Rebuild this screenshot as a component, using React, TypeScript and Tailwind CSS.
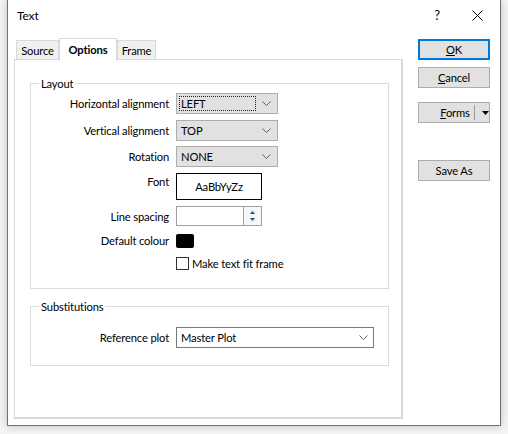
import React from "react";

const Chevron = () => (
  <svg width="9" height="5" viewBox="0 0 9 5" className="shrink-0">
    <polyline points="0.5,0.5 4.5,4.5 8.5,0.5" fill="none" stroke="#606060" strokeWidth="1" />
  </svg>
);

function Combo({ value, focus }: { value: string; focus?: boolean }) {
  return (
    <div className="w-[102px] h-[21px] border border-[#adadad] bg-[#e1e1e1] flex items-center pl-[2px] pr-[6px]">
      <div
        className={
          "flex-1 h-[15px] flex items-center pl-[1px] mr-[6px] leading-none " +
          (focus ? "border border-dotted border-[#222]" : "border border-transparent")
        }
      >
        {value}
      </div>
      <Chevron />
    </div>
  );
}

function Row({ label, children, top, align = "center" }: { label: string; children: React.ReactNode; top: string; align?: "center" | "start" }) {
  return (
    <div className={"flex " + top + (align === "center" ? " items-center" : " items-start")}>
      <div className={"w-[138px] text-right shrink-0" + (align === "start" ? " pt-[1px]" : "")}>{label}</div>
      <div className="ml-[7px] flex">{children}</div>
    </div>
  );
}

function Btn({ children, primary, cls }: { children: React.ReactNode; primary?: boolean; cls: string }) {
  return (
    <div
      className={
        "w-[72px] h-[21px] bg-[#e1e1e1] flex items-center justify-center " +
        (primary ? "border-2 border-[#0078d7] " : "border border-[#adadad] ") +
        cls
      }
    >
      {children}
    </div>
  );
}

export default function App() {
  return (
    <div className="w-[508px] h-[434px] bg-[#f4f4f4] overflow-hidden text-[11.2px] leading-[15px] tracking-[-0.15px] text-black font-['Lato','Noto_Sans',sans-serif]">
      <div className="ml-[7px] w-[494px] h-[426px] bg-white border-x border-b border-[#707070] shadow-[0_0_8px_rgba(0,0,0,0.22)] flex flex-col">
        {/* title bar */}
        <div className="h-[30px] flex items-center pl-[9px] shrink-0 text-[12px]">
          <span className="flex-1">Text</span>
          <span className="w-[20px] text-center text-[13px] mr-[25px]">?</span>
          <svg width="11" height="11" viewBox="0 0 11 11" className="mr-[17px]">
            <line x1="0.5" y1="0.5" x2="10.5" y2="10.5" stroke="#000" strokeWidth="1" />
            <line x1="10.5" y1="0.5" x2="0.5" y2="10.5" stroke="#000" strokeWidth="1" />
          </svg>
        </div>

        {/* body */}
        <div className="flex pl-[6px]">
          {/* left: tabs + panel */}
          <div className="w-[389px] flex flex-col">
            <div className="flex items-end h-[22px] mt-[8px] ml-[2px] -mb-px relative z-10">
              <div className="w-[43px] h-[20px] bg-[#f0f0f0] border border-[#d9d9d9] flex items-center justify-center">Source</div>
              <div className="w-[58px] h-[22px] bg-white border border-b-0 border-[#d9d9d9] flex items-center justify-center font-bold pb-[1px]">Options</div>
              <div className="w-[39px] h-[20px] bg-[#f0f0f0] border border-[#d9d9d9] flex items-center justify-center">Frame</div>
            </div>
            <div className="h-[360px] border-t border-l border-r-2 border-b-2 border-[#d9d9d9] pl-[15px] pt-[23px]">
              {/* Layout group */}
              <div className="relative w-[359px] border border-[#dcdcdc] pt-[9px] pb-[17px]">
                <span className="absolute left-[8px] top-[-8px] bg-white px-[2px]">Layout</span>
                <Row label="Horizontal alignment" top="">
                  <Combo value="LEFT" focus />
                </Row>
                <Row label="Vertical alignment" top="mt-[6px]">
                  <Combo value="TOP" />
                </Row>
                <Row label="Rotation" top="mt-[5px]">
                  <Combo value="NONE" />
                </Row>
                <Row label="Font" top="mt-[6px]" align="start">
                  <div className="w-[86px] h-[27px] border border-black flex items-center justify-center">AaBbYyZz</div>
                </Row>
                <Row label="Line spacing" top="mt-[6px]">
                  <div className="flex h-[20px]">
                    <div className="w-[67px] h-full border border-[#a0a0a0] border-r-0 bg-white" />
                    <div className="w-[19px] h-full border border-[#a0a0a0] bg-[#f7f7f7] flex flex-col items-center justify-center gap-[4px]">
                      <svg width="5" height="3" viewBox="0 0 5 3"><polygon points="2.5,0 5,3 0,3" fill="#1c4f8c" /></svg>
                      <svg width="5" height="3" viewBox="0 0 5 3"><polygon points="0,0 5,0 2.5,3" fill="#1c4f8c" /></svg>
                    </div>
                  </div>
                </Row>
                <Row label="Default colour" top="mt-[7px]">
                  <div className="w-[18px] h-[14px] bg-black rounded-[2px]" />
                </Row>
                <div className="flex items-center mt-[8px] ml-[145px]">
                  <div className="w-[13px] h-[13px] border border-[#333] bg-white" />
                  <span className="ml-[3px]">Make text fit frame</span>
                </div>
              </div>

              {/* Substitutions group */}
              <div className="relative w-[359px] border border-[#dcdcdc] mt-[17px] pt-[20px] pb-[17px]">
                <span className="absolute left-[8px] top-[-8px] bg-white px-[2px]">Substitutions</span>
                <Row label="Reference plot" top="">
                  <div className="w-[198px] h-[21px] border border-[#7a7a7a] bg-white flex items-center pl-[4px] pr-[5px]">
                    <span className="flex-1 leading-none">Master Plot</span>
                    <Chevron />
                  </div>
                </Row>
              </div>
            </div>
          </div>

          {/* right: buttons */}
          <div className="ml-[15px] mt-[9px] flex flex-col">
            <Btn primary cls="">
              <span><u>O</u>K</span>
            </Btn>
            <Btn cls="mt-[7px]">
              <span><u>C</u>ancel</span>
            </Btn>
            <div className="mt-[14px] w-[72px] h-[21px] bg-[#e1e1e1] border border-[#adadad] flex items-center">
              <span className="ml-[18px] w-[36px] text-center"><u>F</u>orms</span>
              <div className="ml-[1px] w-px h-[15px] bg-[#9a9a9a]" />
              <svg width="7" height="4" viewBox="0 0 7 4" className="ml-[7px]"><polygon points="0,0 7,0 3.5,4" fill="#000" /></svg>
            </div>
            <Btn cls="mt-[37px]">
              <span>Save As</span>
            </Btn>
          </div>
        </div>
      </div>
    </div>
  );
}
